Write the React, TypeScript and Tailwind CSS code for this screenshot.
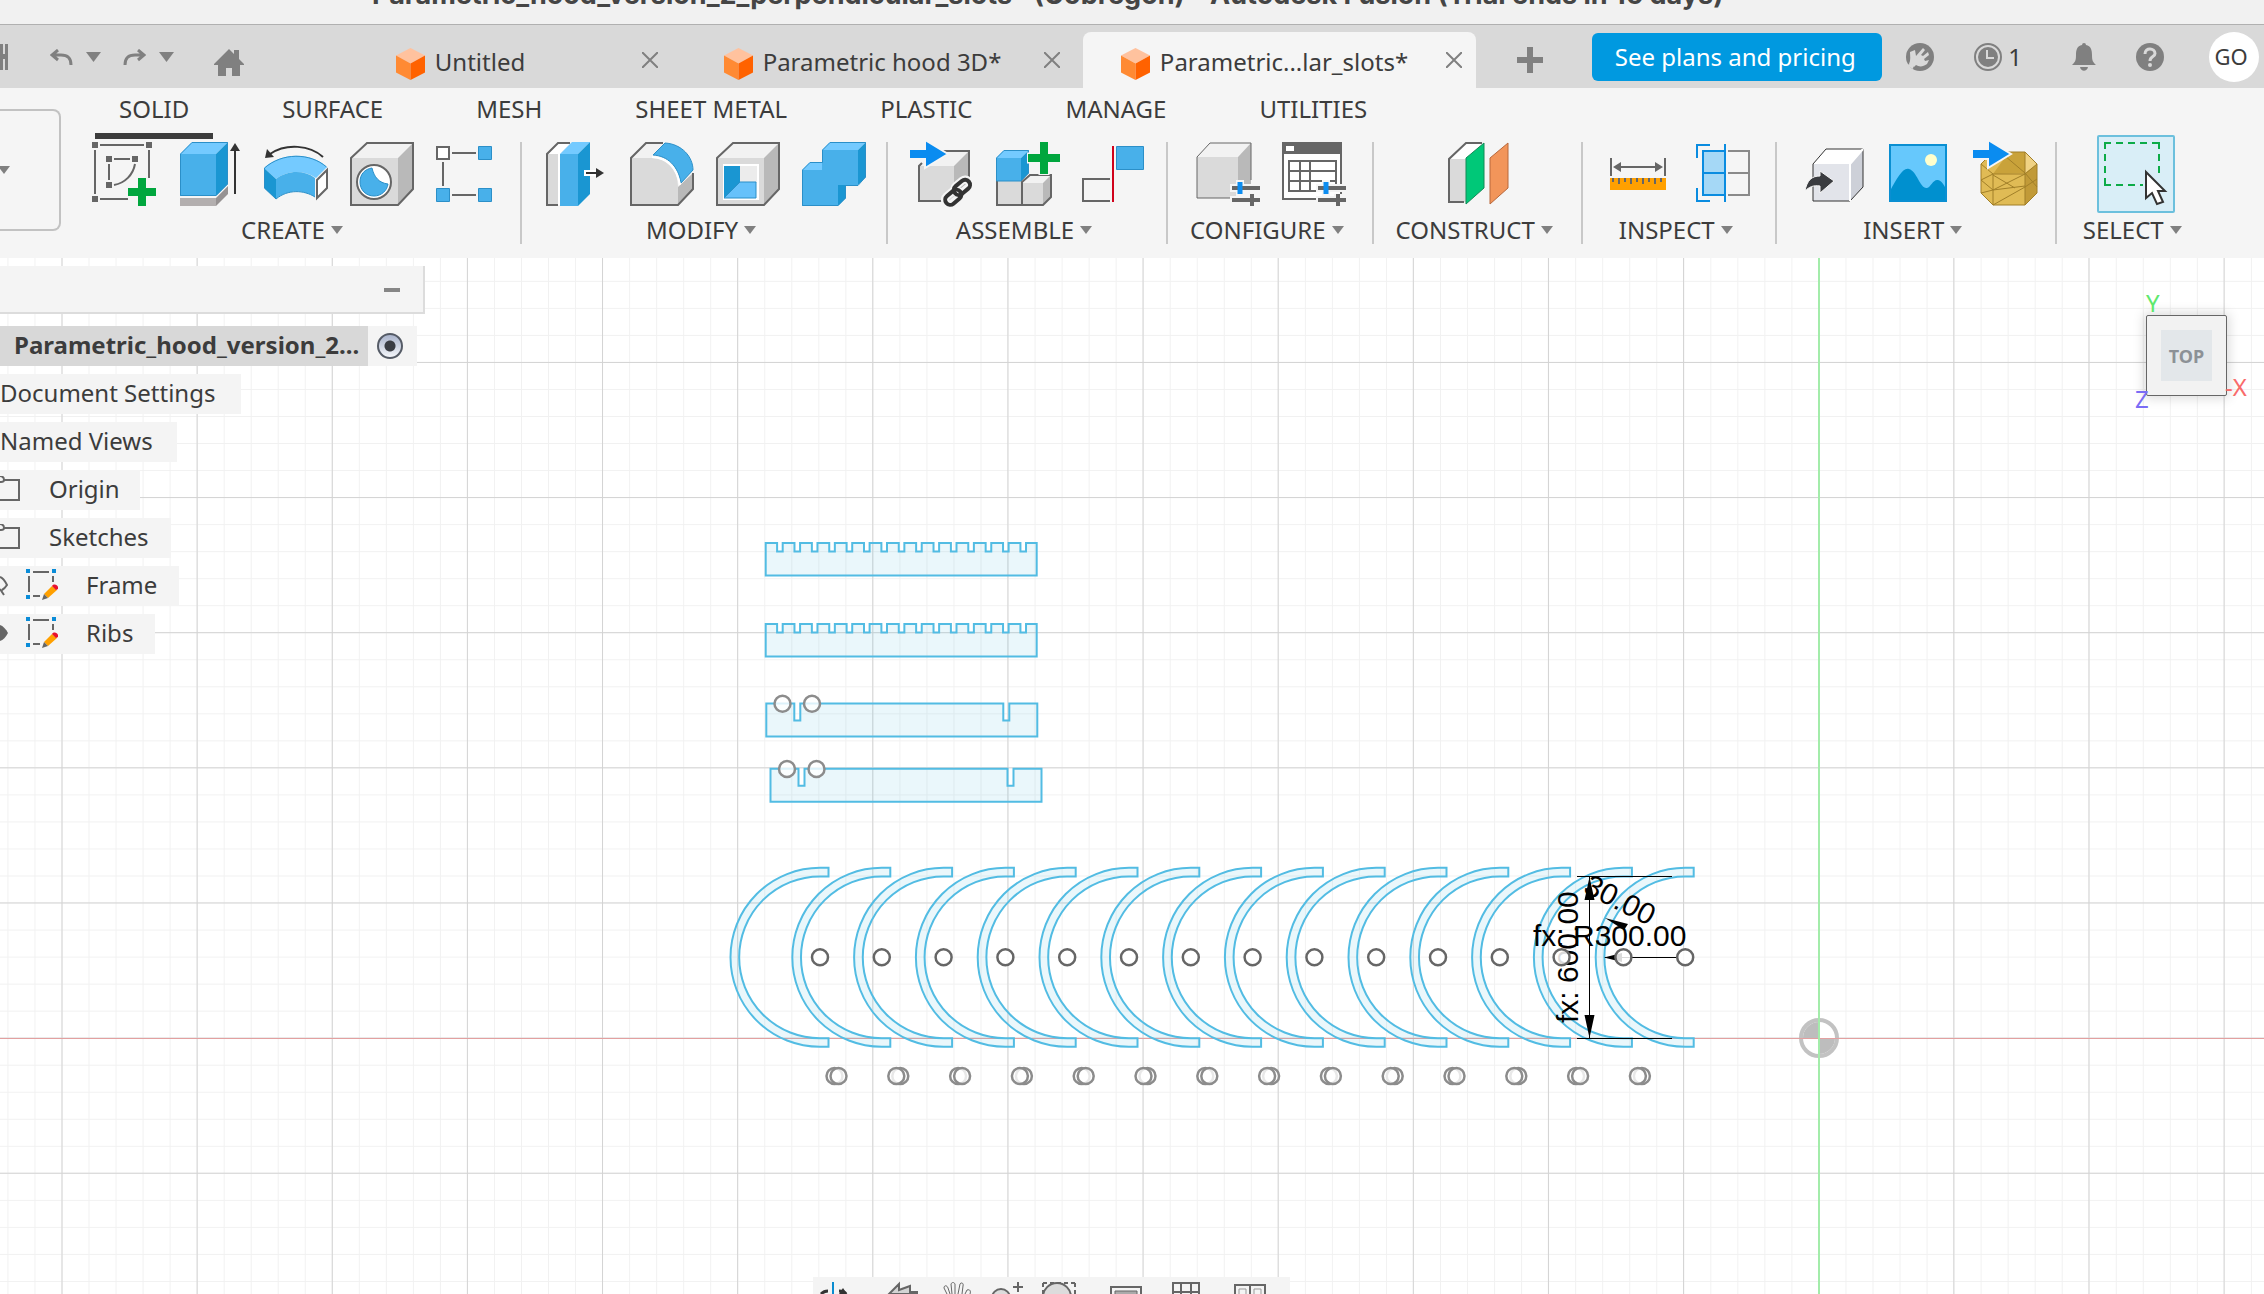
import { useState, type ReactNode } from 'react';

const GRAY = '#666666';
const DARK = '#333333';

/* ---------- small shared bits ---------- */

function Caret({ className }: { className?: string }) {
  return (
    <svg viewBox="0 0 12 8" className={className ?? 'h-2 w-3'} aria-hidden="true">
      <path d="M0 0H12L6 8Z" fill="#808080" />
    </svg>
  );
}

function Icon({ children }: { children: ReactNode }) {
  return (
    <svg viewBox="0 0 64 64" className="size-16 overflow-visible" fill="none" aria-hidden="true">
      {children}
    </svg>
  );
}

function CubeIcon() {
  return (
    <svg viewBox="0 0 29 32" className="mt-1 h-8 w-[29px] shrink-0" aria-hidden="true">
      <path d="M14.5 0L29 7.5L14.5 15.5L0 7.5Z" fill="#ffc29e" />
      <path d="M0 7.5L14.5 15.5V32L0 24.5Z" fill="#ff8a33" />
      <path d="M29 7.5L14.5 15.5V32L29 24.5Z" fill="#ff6200" />
    </svg>
  );
}

function Plus({ x, y, r }: { x: number; y: number; r: number }) {
  return (
    <g>
      <path d={`M${x - r - 1} ${y}H${x + r + 1}M${x} ${y - r - 1}V${y + r + 1}`} stroke="#f5f5f5" strokeWidth="11" />
      <path d={`M${x - r} ${y}H${x + r}M${x} ${y - r}V${y + r}`} stroke="#00a63e" strokeWidth="8" />
    </g>
  );
}

function Sliders() {
  return (
    <g>
      <path d="M34 46H64M34 58H64M44 38V54M56 52V64" stroke="#f5f5f5" strokeWidth="8" />
      <path d="M36 46H64M36 58H64M56 52V64" stroke={GRAY} strokeWidth="4" />
      <path d="M44 40V52" stroke="#0d8df0" strokeWidth="5" />
    </g>
  );
}

function BlueArrow() {
  return <path d="M-1 7H15V-2L38 12L15 26V17H-1Z" fill="#0a8cf0" stroke="#f5f5f5" strokeWidth="2" />;
}

function GrayBox() {
  return (
    <g>
      <path d="M1 16L17 1H63L48 16Z" fill="#f2f2f2" />
      <path d="M1 16H48V63H1Z" fill="#dadada" />
      <path d="M48 16L63 1V47L48 63Z" fill="#b9b9b9" />
      <path d="M1 16L17 1H63V47L48 63H1Z" stroke={GRAY} strokeWidth="2" />
    </g>
  );
}

/* ---------- ribbon icons ---------- */

const createSketch = (
  <Icon>
    <path d="M8 3H52M3 8V52M57 8V36M8 57H36M22 17H38M17 22V38M22 43C33 41 41 33 43 22" stroke={GRAY} strokeWidth="2" />
    <path d="M0 0h6v6h-6ZM54 0h6v6h-6ZM0 54h6v6h-6ZM14 14h6v6h-6ZM40 14h6v6h-6ZM14 40h6v6h-6Z" fill={GRAY} />
    <Plus x={50} y={50} r={14} />
  </Icon>
);

const extrude = (
  <Icon>
    <path d="M2 56H38V64H2Z" fill="#b3afaf" />
    <path d="M38 56L50 44V52L38 64Z" fill="#969292" />
    <path d="M2 12L14 0H50L38 12Z" fill="#74caff" />
    <path d="M2 12H38V54H2Z" fill="#48b0ea" />
    <path d="M38 12L50 0V42L38 54Z" fill="#1a96d2" />
    <path d="M2.5 12L14 0.5H49.5V42L38 53.5H2.5Z" stroke="#2b8fc8" />
    <path d="M57 52V8" stroke={DARK} strokeWidth="2" />
    <path d="M57 1L62 9H52Z" fill={DARK} />
  </Icon>
);

const revolve = (
  <Icon>
    <path d="M59 15C46 3 22 1 6 12" stroke={DARK} strokeWidth="2" />
    <path d="M1 16L3 7L10 15Z" fill={DARK} />
    <path d="M0 26C18 10 46 10 63 25L52 36C40 28 24 28 12 37Z" fill="#74caff" />
    <path d="M12 37C24 28 40 28 51 36V55C40 48 24 47 12 57Z" fill="#48b0ea" />
    <path d="M0 26L12 37V57L0 46Z" fill="#1a96d2" />
    <path d="M0.5 26C18 10.5 46 10.5 62.5 25M0.5 26V46L12 57C24 47 40 48 51 55" stroke="#2b8fc8" />
    <path d="M53 38L63 28V46L53 56Z" fill="#fff" stroke={GRAY} strokeWidth="2" />
  </Icon>
);

const hole = (
  <Icon>
    <GrayBox />
    <circle cx="24" cy="40" r="17" fill="#fff" stroke={GRAY} strokeWidth="2" />
    <path d="M22 26C24 35 29 41 38 42C37 49 31 54 24 54C16 54 10 48 10 40C10 32 15 27 22 26Z" fill="#48b0ea" stroke="#2b8fc8" />
  </Icon>
);

const pattern = (
  <Icon>
    <path d="M1 5H13V17H1Z" fill="#fff" stroke={GRAY} strokeWidth="2" />
    <path d="M42.5 4.5h13v13h-13ZM0.5 46.5h13v13h-13ZM42.5 46.5h13v13h-13Z" fill="#48b0ea" stroke="#2b8fc8" />
    <path d="M16 11H40M7 20V44M16 53H40" stroke={GRAY} strokeWidth="2" />
  </Icon>
);

const pressPull = (
  <Icon>
    <path d="M3 12L14 1H26L16 12V63H3Z" fill="#fff" />
    <path d="M3 12H14V63H3Z" fill="#dadada" />
    <path d="M26 1H14L3 12V63H14" stroke={GRAY} strokeWidth="2" />
    <path d="M16 12L28 0H46L34 12Z" fill="#74caff" />
    <path d="M16 12H34V64H16Z" fill="#48b0ea" />
    <path d="M34 12L46 0V52L34 64Z" fill="#1a96d2" />
    <path d="M40 31H54" stroke="#fff" strokeWidth="6" />
    <path d="M42 31H54" stroke={DARK} strokeWidth="2" />
    <path d="M60 31L52 26V36Z" fill={DARK} />
  </Icon>
);

const fillet = (
  <Icon>
    <path d="M1 16L16 1H33L22 14L24 16Z" fill="#f2f2f2" />
    <path d="M1 16H22C38 16 48 28 48 46V63H1Z" fill="#dadada" />
    <path d="M48 45L63 31V47L48 63Z" fill="#b9b9b9" />
    <path d="M33 1H16L1 16V63H48L63 47V31" stroke={GRAY} strokeWidth="2" />
    <path d="M23 13L35 1C52 2 63 15 63 28L51 41C48 24 38 14 23 13Z" fill="#48b0ea" stroke="#2b8fc8" />
    <path d="M22 15C38 16 47 26 50 43" stroke="#fff" strokeWidth="2" />
  </Icon>
);

const shell = (
  <Icon>
    <GrayBox />
    <path d="M7 22H43V58H7Z" fill="#fff" />
    <path d="M24 24H41V41H24Z" fill="#ececec" />
    <path d="M8 24H24V40L8 56Z" fill="#1a96d2" />
    <path d="M24 40H40V56H8Z" fill="#66c1fa" stroke="#2b8fc8" />
  </Icon>
);

const combine = (
  <Icon>
    <path d="M0 28L8 20H21V28ZM20 8L28 0H64L56 8Z" fill="#74caff" />
    <path d="M0 28H20V8H56V43H36V64H0Z" fill="#48b0ea" />
    <path d="M56 8L64 0V35L56 43ZM36 43H44V56L36 64Z" fill="#1a96d2" />
    <path d="M0.5 28L8 20.5H20.5V8L28 0.5H63.5V35L56 43.5H43.5V56L36 63.5H0.5Z" stroke="#2b8fc8" />
  </Icon>
);

const insertComponent = (
  <Icon>
    <path d="M9 24L24 9H59L44 24Z" fill="#f2f2f2" />
    <path d="M9 24H44V59H9Z" fill="#dadada" />
    <path d="M44 24L59 9V44L44 59Z" fill="#b9b9b9" />
    <path d="M30 9H59V38M12 21L9 24V59H32" stroke={GRAY} strokeWidth="2" />
    <BlueArrow />
    <g transform="rotate(-40 48 50)" stroke="#f5f5f5" strokeWidth="8">
      <rect x="32" y="46" width="17" height="9" rx="4" />
      <rect x="46" y="44" width="17" height="9" rx="4" />
    </g>
    <g transform="rotate(-40 48 50)" stroke={DARK} strokeWidth="4">
      <rect x="32" y="46" width="18" height="10" rx="5" />
      <rect x="45" y="44" width="18" height="10" rx="5" />
    </g>
  </Icon>
);

const newComponent = (
  <Icon>
    <path d="M1 39H26V63H1Z" fill="#dadada" />
    <path d="M26 41H47V63H26Z" fill="#dadada" />
    <path d="M26 41L34 33H56L47 41Z" fill="#f2f2f2" />
    <path d="M47 41L55 33V55L47 63Z" fill="#b9b9b9" />
    <path d="M1 39V63H47L55 55V33H34L26 40V63" stroke={GRAY} strokeWidth="2" />
    <path d="M0 16L8 8H33L25 16Z" fill="#74caff" />
    <path d="M0 16H25V39H0Z" fill="#48b0ea" />
    <path d="M25 16L33 8V31L25 39Z" fill="#1a96d2" />
    <path d="M0.5 16L8 8.5H32.5V31L25 39H0.5Z" stroke="#2b8fc8" />
    <Plus x={48} y={16} r={16} />
  </Icon>
);

const joint = (
  <Icon>
    <path d="M28 37H1V59H28" stroke={GRAY} strokeWidth="2" />
    <path d="M34.5 4.5H61.5V27.5H34.5Z" fill="#48b0ea" stroke="#2b8fc8" />
    <path d="M31 4V60" stroke="#d0021b" strokeWidth="2" />
  </Icon>
);

const configureModel = (
  <Icon>
    <path d="M1 15L14 1H55L42 15Z" fill="#f2f2f2" />
    <path d="M1 15H42V56H1Z" fill="#dadada" />
    <path d="M42 15L55 1V42L42 56Z" fill="#b9b9b9" />
    <path d="M36 56H1V15L14 1H55V38" stroke={GRAY} strokeWidth="1" />
    <Sliders />
  </Icon>
);

const configureTable = (
  <Icon>
    <path d="M1 1H59V57H1Z" fill="#fff" stroke={GRAY} strokeWidth="2" />
    <path d="M0 0H60V12H0Z" fill={GRAY} />
    <path d="M4 4H12V9H4Z" fill="#fff" />
    <path d="M7 19H54V49H7ZM7 29H54M7 39H54M18 19V49M28 19V49" stroke={GRAY} strokeWidth="2" />
    <Sliders />
  </Icon>
);

const offsetPlane = (
  <Icon>
    <path d="M3 17L20 1H36L20 17Z" fill="#fff" />
    <path d="M3 17H20V60H3Z" fill="#dadada" />
    <path d="M36 1H20L3 17V60H18" stroke={GRAY} strokeWidth="2" />
    <path d="M20 16L38 1V46L20 62Z" fill="#00c878" stroke="#138a57" />
    <path d="M44 16L62 1V46L44 62Z" fill="#f2955a" stroke="#b8683c" />
  </Icon>
);

const measure = (
  <Icon>
    <path d="M5 36H61V48H5Z" fill="#ffa000" />
    <path d="M8 36v4M14 36v6M20 36v4M26 36v6M32 36v4M38 36v6M44 36v4M50 36v6M56 36v4" stroke={GRAY} strokeWidth="2" />
    <path d="M6 16V34M60 16V34M12 25H54" stroke={GRAY} strokeWidth="2" />
    <path d="M8 25L16 20V30ZM58 25L50 20V30Z" fill={GRAY} />
  </Icon>
);

const section = (
  <Icon>
    <path d="M12 9H34V53H12Z" fill="#a5d8f6" />
    <path d="M37 9H58V53H37M37 31H58" stroke="#8a8a8a" strokeWidth="2" />
    <path d="M34 9H12V53H34M12 31H34M34 2V60M19 3H6V16M6 46V59H19" stroke="#0a8ce0" strokeWidth="2" />
  </Icon>
);

const derive = (
  <Icon>
    <path d="M14 22L27 7H64L51 22Z" fill="#fff" />
    <path d="M14 22H51V59H14Z" fill="#e2e4ea" />
    <path d="M51 22L64 7V45L51 59Z" fill="#cdd0d8" />
    <path d="M14 22L27 7H64V45L51 59H14Z" stroke={DARK} />
    <path d="M51 59V22L64 7" stroke="#fff" strokeWidth="2" />
    <path d="M6 49C8 38 13 34 21 34V29L35 39L21 51V44C14 43 10 45 6 49Z" fill="#3a3c40" stroke="#f5f5f5" />
  </Icon>
);

const decal = (
  <Icon>
    <path d="M5 3H61V59H5Z" fill="#66c8fc" />
    <path d="M5 49C12 36 18 25 24 27C32 29 35 47 42 46C46 45 48 37 53 38C57 39 59 43 61 47V59H5Z" fill="#0090cf" />
    <path d="M5 3H61V59H5Z" stroke="#0a8fd2" strokeWidth="2" />
    <circle cx="46" cy="18" r="6" fill="#ffffcc" />
  </Icon>
);

const mesh = (
  <Icon>
    <path d="M10 22L22 10H54L66 22V51L54 63H22L10 51Z" fill="#e0bb55" />
    <path d="M22 32L38 10H54V31Z" fill="#c9a23a" />
    <path d="M54 31L66 22V51L54 63Z" fill="#c19a38" />
    <path d="M54 10L66 22L54 31Z" fill="#f0d284" />
    <path
      d="M10 22L22 10H54L66 22V51L54 63H22L10 51ZM10 22L22 32H54L66 22M22 32V63M54 10V63M10 38L22 32M10 38L22 48L54 44M22 48L54 32M10 51L22 48M22 63L54 45M54 45L66 37M34 14L54 31M54 31L66 45M22 33L44 46"
      stroke="#a17f28"
      strokeWidth="1"
    />
    <g transform="translate(2 0)">
      <BlueArrow />
    </g>
  </Icon>
);

/* ---------- application top bars ---------- */

const documents = [
  { id: 'untitled', title: 'Untitled' },
  { id: 'hood3d', title: 'Parametric hood 3D*' },
  { id: 'slots', title: 'Parametric...lar_slots*' },
];

function TitleBar() {
  return (
    <header className="h-[25px] shrink-0 overflow-hidden border-b border-[#b0b0b0] bg-[#f1f1f1]">
      <h1 className="-mt-[19px] ml-[372px] font-['Inter',sans-serif] text-[27px] leading-7 font-bold whitespace-nowrap text-[#454545]">
        Parametric_hood_version_2_perpendicular_slots* (Gobregon) - Autodesk Fusion (Trial ends in 16 days)
      </h1>
    </header>
  );
}

function DocumentBar() {
  const [active, setActive] = useState('slots');

  return (
    <div className="flex h-[63px] shrink-0 items-center bg-[#d9d9d9]">
      <div className="flex w-[279px] shrink-0 items-center">
        <button aria-label="Save">
          <svg viewBox="0 0 8 26" className="h-[26px] w-2" aria-hidden="true">
            <path d="M0 0H3V10H5V0H8V26H5V15H3V26H0Z" fill="#808080" />
          </svg>
        </button>
        <button aria-label="Undo" className="ml-[42px]">
          <svg viewBox="0 0 23 16" className="h-4 w-[23px]" fill="none" stroke="#808080" strokeWidth="3" aria-hidden="true">
            <path d="M8 1L2 6L8 11M2 6H11C18 6 21 9 21 16" />
          </svg>
        </button>
        <button aria-label="Undo history" className="ml-[13px]">
          <Caret className="h-2.5 w-[15px]" />
        </button>
        <button aria-label="Redo" className="ml-[22px]">
          <svg viewBox="0 0 23 16" className="h-4 w-[23px]" fill="none" stroke="#808080" strokeWidth="3" aria-hidden="true">
            <path d="M15 1L21 6L15 11M21 6H12C5 6 2 9 2 16" />
          </svg>
        </button>
        <button aria-label="Redo history" className="ml-[13px]">
          <Caret className="h-2.5 w-[15px]" />
        </button>
        <button aria-label="Home" className="mt-3 ml-10">
          <svg viewBox="0 0 30 27" className="h-[27px] w-[30px]" fill="#808080" aria-hidden="true">
            <path d="M15 0L20 5V1H25V10L30 15V16H26V27H18V19H12V27H4V16H0V15Z" />
          </svg>
        </button>
      </div>

      <div className="flex h-14 gap-[9px] self-end">
        {documents.map((doc) => (
          <div
            key={doc.id}
            className={
              doc.id === active
                ? 'flex w-[393px] items-center rounded-t-lg bg-[#f5f5f5]'
                : 'flex w-[393px] items-center'
            }
          >
            <button
              onClick={() => setActive(doc.id)}
              className="flex flex-1 items-center justify-center gap-2.5 pt-[3px] whitespace-nowrap"
            >
              <CubeIcon />
              {doc.title}
            </button>
            <button aria-label={`Close ${doc.title}`} className="mr-3.5">
              <svg viewBox="0 0 16 16" className="size-4" stroke="#808080" strokeWidth="2" aria-hidden="true">
                <path d="M0 0L16 16M16 0L0 16" />
              </svg>
            </button>
          </div>
        ))}
        <button aria-label="New design" className="ml-8">
          <svg viewBox="0 0 26 26" className="size-[26px]" stroke="#808080" strokeWidth="6" aria-hidden="true">
            <path d="M0 13H26M13 0V26" />
          </svg>
        </button>
      </div>

      <div className="mr-[5px] ml-auto flex items-center">
        <button className="h-12 w-[290px] rounded-md bg-[#0099e0] pr-1 text-white">See plans and pricing</button>
        <button aria-label="Extensions" className="ml-6">
          <svg viewBox="0 0 28 28" className="size-7" aria-hidden="true">
            <circle cx="14" cy="14" r="14" fill="#808080" />
            <path
              d="M4 9L9 7L10 13L17 5L19 7L15 12L17 13L22 9L23 12L18 16L19 18L23 17L21 21C17 24 13 24 10 22L8 24L3 21C5 17 4 13 4 9Z"
              fill="#d9d9d9"
            />
            <path d="M0 22L8 20L7 26Z" fill="#d9d9d9" />
          </svg>
        </button>
        <button className="ml-10 flex items-center gap-[6px]">
          <svg viewBox="0 0 28 28" className="size-7" aria-label="Job status">
            <circle cx="14" cy="14" r="13" fill="none" stroke="#808080" strokeWidth="2" />
            <circle cx="14" cy="14" r="10" fill="#808080" />
            <path d="M13 7V15H20" fill="none" stroke="#d9d9d9" strokeWidth="2" />
          </svg>
          1
        </button>
        <button aria-label="Notifications" className="ml-[50px]">
          <svg viewBox="0 0 24 28" className="h-7 w-6" fill="#808080" aria-hidden="true">
            <path d="M10 2A2 2 0 0 1 14 2C19 3 20 7 20 12C20 18 21 19 24 22H0C3 19 4 18 4 12C4 7 5 3 10 2ZM8 24H16C15 29 9 29 8 24Z" />
          </svg>
        </button>
        <button aria-label="Help" className="ml-10">
          <svg viewBox="0 0 28 28" className="size-7" aria-hidden="true">
            <circle cx="14" cy="14" r="14" fill="#808080" />
            <path d="M9 11C9 4 19 5 19 10.5C19 14 14 13 14 18" fill="none" stroke="#d9d9d9" strokeWidth="3" />
            <circle cx="14" cy="22" r="2" fill="#d9d9d9" />
          </svg>
        </button>
        <button className="ml-[45px] size-[50px] rounded-full bg-white pr-1.5 text-[22px]">GO</button>
      </div>
    </div>
  );
}

/* ---------- ribbon ---------- */

const ribbonTabs = ['SOLID', 'SURFACE', 'MESH', 'SHEET METAL', 'PLASTIC', 'MANAGE', 'UTILITIES'];

const ribbonGroups = [
  {
    name: 'CREATE',
    tools: [
      { name: 'Create Sketch', icon: createSketch },
      { name: 'Extrude', icon: extrude },
      { name: 'Revolve', icon: revolve },
      { name: 'Hole', icon: hole },
      { name: 'Pattern', icon: pattern },
    ],
  },
  {
    name: 'MODIFY',
    tools: [
      { name: 'Press Pull', icon: pressPull },
      { name: 'Fillet', icon: fillet },
      { name: 'Shell', icon: shell },
      { name: 'Combine', icon: combine },
    ],
  },
  {
    name: 'ASSEMBLE',
    tools: [
      { name: 'Insert Component', icon: insertComponent },
      { name: 'New Component', icon: newComponent },
      { name: 'Joint', icon: joint },
    ],
  },
  {
    name: 'CONFIGURE',
    tools: [
      { name: 'Configure Model', icon: configureModel },
      { name: 'Configuration Table', icon: configureTable },
    ],
  },
  { name: 'CONSTRUCT', tools: [{ name: 'Offset Plane', icon: offsetPlane }] },
  {
    name: 'INSPECT',
    tools: [
      { name: 'Measure', icon: measure },
      { name: 'Section Analysis', icon: section },
    ],
  },
  {
    name: 'INSERT',
    tools: [
      { name: 'Derive', icon: derive },
      { name: 'Decal', icon: decal },
      { name: 'Insert Mesh', icon: mesh },
    ],
  },
];

function GroupLabel({ name }: { name: string }) {
  return (
    <button className="mt-2 flex items-center gap-[6px] pr-2 leading-8">
      {name}
      <Caret />
    </button>
  );
}

function Ribbon() {
  const [tab, setTab] = useState('SOLID');

  return (
    <div className="flex h-[170px] shrink-0 bg-[#f5f5f5]">
      <button
        aria-label="Change workspace"
        className="mt-[21px] h-[122px] w-[61px] shrink-0 rounded-r-lg border-2 border-l-0 border-[#c2c2c2]"
      >
        <Caret className="-ml-0.5 h-2 w-3" />
      </button>
      <div>
        <nav className="ml-[34px] flex gap-[45px]">
          {ribbonTabs.map((name) => (
            <button
              key={name}
              onClick={() => setTab(name)}
              className={
                name === tab
                  ? 'h-[51px] border-b-[6px] border-[#3c3c3c] px-6 pb-[3px] leading-[42px] whitespace-nowrap'
                  : 'h-[51px] border-b-[6px] border-transparent px-6 pb-[3px] leading-[42px] whitespace-nowrap'
              }
            >
              {name}
            </button>
          ))}
        </nav>
        <div className="ml-[9px] flex pt-[3px]">
          {ribbonGroups.map((group) => (
            <div key={group.name} className="flex">
              <div className="flex flex-col items-center pr-5 pl-[22px]">
                <div className="flex gap-[22px]">
                  {group.tools.map((tool) => (
                    <button key={tool.name} aria-label={tool.name}>
                      {tool.icon}
                    </button>
                  ))}
                </div>
                <GroupLabel name={group.name} />
              </div>
              <div className="h-[102px] w-0.5 bg-[#c8c8c8]" />
            </div>
          ))}
          <div className="flex flex-col items-center pl-[26px]">
            <button
              aria-label="Select"
              className="-my-[7px] size-[78px] rounded-xs border-2 border-[#6cc0dd] bg-[#d9eef7]"
            >
              <svg viewBox="0 0 74 74" className="size-[74px]" fill="none" aria-hidden="true">
                <path
                  d="M6 12V6H12M17 6H24M29 6H36M41 6H48M53 6H60V12M60 17V24M60 29V36M6 17V24M6 29V36M6 41V48H12M17 48H24M29 48H36M41 48H44"
                  stroke="#0cab48"
                  strokeWidth="2"
                />
                <path d="M47 35V61L53 56L58 67L64 65L59 54H66Z" fill="#fff" stroke={DARK} strokeWidth="2" />
              </svg>
            </button>
            <GroupLabel name="SELECT" />
          </div>
        </div>
      </div>
    </div>
  );
}

/* ---------- browser tree ---------- */

function FolderIcon() {
  return (
    <svg viewBox="0 0 21 26" className="h-[26px] w-[21px]" fill="none" stroke={GRAY} strokeWidth="2" aria-hidden="true">
      <path d="M-6 24H19V4H4C4 1 2 0 -1 0" />
      <path d="M-2 6H1C3 6 4 5 4 4" />
    </svg>
  );
}

function EyeIcon({ visible }: { visible: boolean }) {
  return (
    <svg viewBox="0 0 8 24" className="h-6 w-2" aria-hidden="true">
      {visible ? (
        <path d="M0 4C3 5 6 8 8 12C6 16 3 19 0 20Z" fill={GRAY} />
      ) : (
        <path d="M0 4C3 5 5 8 7 12C5 15 4 16 2 17M0 16L4 22" fill="none" stroke={GRAY} strokeWidth="2" />
      )}
    </svg>
  );
}

function SketchIcon() {
  return (
    <svg viewBox="0 0 32 32" className="ml-[18px] size-8" fill="none" aria-hidden="true">
      <path d="M7 3H23M3 7V23M27 7V13M7 27H14" stroke={GRAY} strokeWidth="2" />
      <path d="M0 0h4v4h-4ZM26 0h4v4h-4ZM0 26h4v4h-4Z" fill="#0a8cd8" />
      <path d="M18 25L26 17L31 21L22 29Z" fill="#ffa000" />
      <path d="M26 17C28 14 33 16 32 20L30 21Z" fill="#e8102e" />
      <path d="M18 25L22 29L16 31Z" fill={GRAY} />
    </svg>
  );
}

const rowClass = 'flex h-10 w-fit items-center bg-[#f4f4f4] pb-0.5 whitespace-nowrap';

function BrowserTree() {
  const [visible, setVisible] = useState({ Frame: false, Ribs: true });

  return (
    <aside className="absolute top-2 left-0 flex flex-col gap-2">
      <div className="mb-1 flex h-12 w-[425px] items-center justify-end border-r-2 border-b-2 border-[#dcdcdc] bg-[#f4f4f4] pt-0.5 pr-[23px]">
        <button aria-label="Collapse browser" className="h-1 w-4 bg-[#868686]" />
      </div>
      <label className="flex h-10 w-[417px] items-center bg-[#f4f4f4] whitespace-nowrap">
        <span className="flex h-10 w-[368px] items-center bg-[#d8d8d8] pb-0.5 pl-3.5 font-bold">
          Parametric_hood_version_2...
        </span>
        <input
          type="radio"
          name="active-component"
          defaultChecked
          className="ml-[9px] size-[26px] appearance-none rounded-full border-2 border-[#555b66] bg-[radial-gradient(circle,#3a3d44_0_5px,transparent_6px),linear-gradient(#aab4cc,#f4f6fa)]"
        />
      </label>
      <button className={`${rowClass} pr-[26px]`}>Document Settings</button>
      <button className={`${rowClass} pr-6`}>Named Views</button>
      <button className={`${rowClass} pr-5`}>
        <FolderIcon />
        <span className="ml-7">Origin</span>
      </button>
      <button className={`${rowClass} pr-[22px]`}>
        <FolderIcon />
        <span className="ml-7">Sketches</span>
      </button>
      {(['Frame', 'Ribs'] as const).map((name) => (
        <div key={name} className={`${rowClass} pr-[22px]`}>
          <button
            aria-label={`Toggle ${name}`}
            onClick={() => setVisible({ ...visible, [name]: !visible[name] })}
          >
            <EyeIcon visible={visible[name]} />
          </button>
          <SketchIcon />
          <span className="ml-7">{name}</span>
        </div>
      ))}
    </aside>
  );
}

/* ---------- sketch canvas ---------- */

const RIB_PITCH = 61.8;
const ribs = Array.from({ length: 15 }, (_, i) => 820 + i * RIB_PITCH);
const ribSlots = Array.from({ length: 14 }, (_, i) => 836.5 + i * RIB_PITCH);

function combPath(x: number, y: number) {
  let d = `M${x} ${y}`;
  for (let i = 0; i < 15; i++) {
    const n = x + 11.4 + i * 17.38;
    d += `H${n}v8.5h5.6v-8.5`;
  }
  return `${d}H${x + 271}v32.5H${x}Z`;
}

function barPath(x: number, y: number) {
  return `M${x} ${y}h28v17h6v-17h203v17h6v-17h28v33h-271Z`;
}

function SketchCanvas() {
  return (
    <svg className="absolute inset-0 h-full w-full" fill="none" aria-label="Sketch">
      <defs>
        <pattern id="minor" x="61.5" y="-31.2" width="27.03" height="27.03" patternUnits="userSpaceOnUse">
          <path d="M0.5 0V27.03M0 0.5H27.03" stroke="#f1f1f1" />
        </pattern>
        <pattern id="major" x="61.5" y="-31.2" width="135.13" height="135.13" patternUnits="userSpaceOnUse">
          <path d="M0.5 0V135.13M0 0.5H135.13" stroke="#d3d3d3" />
        </pattern>
      </defs>
      <rect width="100%" height="100%" fill="url(#minor)" />
      <rect width="100%" height="100%" fill="url(#major)" />

      {/* drawing coordinates start at the window's top edge */}
      <g transform="translate(0 -258)">
        <circle cx="1819" cy="1038" r="18" fill="#fff" stroke="#c2c2c2" strokeWidth="4" />
        <path d="M1819 1038V1022A16 16 0 0 0 1803 1038ZM1819 1038V1054A16 16 0 0 0 1835 1038Z" fill="#bdbdbd" />
        <path d="M0 1038.5H4000" stroke="#e3a0a0" />
        <path d="M1819 0V3000" stroke="#a3ecaa" strokeWidth="2" />

        <g stroke="#52bce3" strokeWidth="2" fill="#4fbbe0" fillOpacity="0.12">
          <path d={combPath(765.7, 543)} />
          <path d={combPath(765.7, 624)} />
          <path d={barPath(766.3, 703.6)} />
          <path d={barPath(770.5, 768.8)} />
          {ribs.map((x) => (
            <path
              key={x}
              d={`M${x + 8.5} 867.8H${x}A89.5 89.5 0 0 0 ${x} 1046.8H${x + 8.5}V1038.2H${x}A80.9 80.9 0 0 1 ${x} 876.4H${x + 8.5}Z`}
            />
          ))}
        </g>

        <g stroke="#000">
          <path d="M1577 876.5H1672M1577 1038.5H1672M1589.5 877V1038M1605 957.5H1677" />
        </g>
        <g fill="#000">
          <path d="M1589.5 877L1594.5 900H1584.5ZM1589.5 1038L1594.5 1015H1584.5Z" />
          <path d="M1604 957.5L1622 953V962ZM1605 918L1628 924L1624 930Z" />
        </g>
        <g fill="#000" className="font-['Liberation_Sans',sans-serif] text-[30px]">
          <text transform="translate(1578 1023) rotate(-90)">fx: 600.00</text>
          <text x="1533" y="946">
            fx: R300.00
          </text>
          <text transform="translate(1582 892) rotate(27)">30.00</text>
        </g>

        <g stroke="#666" strokeWidth="2.5" fill="#fff" fillOpacity="0.85">
          {ribs.map((x) => (
            <circle key={x} cx={x} cy="957.3" r="8" />
          ))}
        </g>
        <g stroke="#8c8c8c" strokeWidth="2.5" fill="#fff" fillOpacity="0.8">
          {ribSlots.map((x, i) => (
            <g key={x}>
              <circle cx={i % 2 ? x + 2 : x - 2} cy="1076" r="8" />
              <circle cx={i % 2 ? x - 2 : x + 2} cy="1076" r="8" />
            </g>
          ))}
          <circle cx="782.5" cy="703.8" r="8" />
          <circle cx="812" cy="703.8" r="8" />
          <circle cx="787" cy="769" r="8" />
          <circle cx="816.5" cy="769" r="8" />
        </g>
      </g>
    </svg>
  );
}

function ViewCube() {
  return (
    <div className="absolute top-[57px] right-[38px] size-20 leading-7">
      <span className="absolute -top-[26px] left-0 text-[#5ee96d]">Y</span>
      <span className="absolute top-[58px] left-[79px] whitespace-nowrap text-[#f96b6b]">-X</span>
      <button className="flex size-[81px] items-center justify-center rounded-xs border border-[#666] bg-[#f2f2f2] shadow-[0_0_12px_2px_rgba(0,0,0,0.15)]">
        <span className="flex size-[51px] items-center justify-center bg-[#e3e7ea] text-[18px] font-bold text-[#8c9196]">
          TOP
        </span>
      </button>
      <span className="absolute top-[70px] -left-[11px] text-[#7a6cf5]">Z</span>
    </div>
  );
}

const navTools = [
  {
    name: 'Orbit',
    gap: 'ml-[3px]',
    art: (
      <>
        <path d="M17 5V17" stroke="#0a8cd0" strokeWidth="2" />
        <path d="M5 17C7 15 9 14 12 14M30 17C29 15 26 14 23 14" stroke={DARK} strokeWidth="3" />
        <path d="M23 17L27 11L31 17Z" fill={DARK} />
      </>
    ),
  },
  {
    name: 'Look At',
    gap: 'ml-9',
    art: <path d="M3 17L13 7V13L24 9V15H31V17Z" fill="#d4d4d4" stroke={GRAY} strokeWidth="2" />,
  },
  {
    name: 'Pan',
    gap: 'ml-5',
    art: (
      <path
        d="M7 17L4 11C4 8 7 8 8 11L10 17M12 17L11 7C12 5 14 5 15 7L15 17M18 17L20 7C21 5 24 6 23 9L22 17M25 17L27 13C30 12 31 14 30 17"
        stroke={GRAY}
      />
    ),
  },
  {
    name: 'Zoom',
    gap: 'ml-4',
    art: (
      <>
        <circle cx="11" cy="21" r="9" fill="#dcdcdc" stroke={GRAY} strokeWidth="2" />
        <path d="M23 10H33M28 5V15" stroke={GRAY} strokeWidth="2" />
      </>
    ),
  },
  {
    name: 'Fit',
    gap: 'ml-[18px]',
    art: (
      <>
        <path d="M1 6H34M1 6V17M33 6V17" stroke={GRAY} strokeWidth="2" strokeDasharray="4 3" />
        <circle cx="15" cy="20" r="14" fill="#dcdcdc" stroke={GRAY} strokeWidth="2" />
      </>
    ),
  },
  {
    name: 'Display Settings',
    gap: 'ml-[33px]',
    art: (
      <>
        <path d="M2 20V10H32V20" stroke={GRAY} strokeWidth="2" />
        <path d="M6 14H28V20H6Z" fill="#aaa" stroke={GRAY} />
      </>
    ),
  },
  {
    name: 'Grid and Snaps',
    gap: 'ml-[26px]',
    art: <path d="M4 20V6H30V20M4 15H30M12 6V20M22 6V20" stroke={GRAY} strokeWidth="2" />,
  },
  {
    name: 'Viewports',
    gap: 'ml-[30px]',
    art: (
      <>
        <path d="M2 20V8H32V20M17 8V20" stroke={GRAY} strokeWidth="2" />
        <path d="M6 12H13V18H6ZM21 12H28V18H21Z" fill="#f4f4f4" stroke="#999" />
      </>
    ),
  },
];

function NavigationBar() {
  return (
    <div className="absolute bottom-0 left-[813px] flex h-[17px] w-[477px] overflow-hidden bg-[#f4f4f4]">
      {navTools.map((tool) => (
        <button key={tool.name} aria-label={tool.name} className={tool.gap}>
          <svg viewBox="0 0 34 17" className="h-[17px] w-[34px]" fill="none" aria-hidden="true">
            {tool.art}
          </svg>
        </button>
      ))}
    </div>
  );
}

export default function App() {
  return (
    <div className="flex h-screen flex-col overflow-hidden bg-white font-['Noto_Sans',sans-serif] text-2xl text-[#3c3c3c]">
      <TitleBar />
      <DocumentBar />
      <Ribbon />
      <main className="relative flex-1 overflow-hidden">
        <SketchCanvas />
        <BrowserTree />
        <ViewCube />
        <NavigationBar />
      </main>
    </div>
  );
}
